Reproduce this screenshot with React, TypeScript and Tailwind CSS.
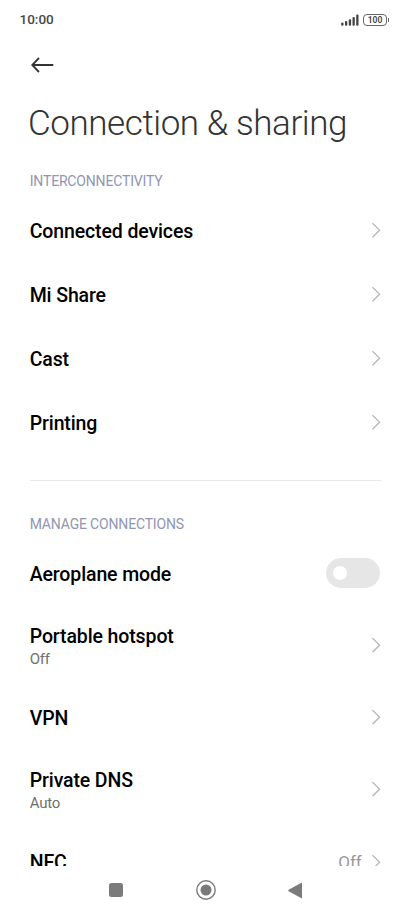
type RowProps = {
  title: string;
  subtitle?: string;
  value?: string;
};

const Chevron = () => (
  <svg width="9" height="16" viewBox="0 0 9 16" fill="none" className="shrink-0">
    <path d="M0.5 1.1L7.6 8.2L0.5 15.3" stroke="#b5b5b5" strokeWidth="1.3" />
  </svg>
);

const Row = ({ title, subtitle, value }: RowProps) => (
  <div
    className={`flex shrink-0 items-center justify-between ${
      subtitle ? "h-[80.3px]" : "h-16"
    }`}
  >
    <div className={subtitle ? "pt-[3px]" : "pt-[2px]"}>
      <p className="text-[19.5px] leading-[25px] font-medium tracking-[-0.12px] text-black">
        {title}
      </p>
      {subtitle && (
        <p className="text-[15px] leading-[21px] tracking-[-0.2px] text-[#707070]">
          {subtitle}
        </p>
      )}
    </div>
    <div className="flex items-center gap-2.5">
      {value && (
        <span className="pt-[3px] text-[17px] tracking-[-0.1px] text-[#999999]">
          {value}
        </span>
      )}
      <Chevron />
    </div>
  </div>
);

const StatusBar = () => (
  <header className="flex h-10 shrink-0 items-center justify-between pr-[22px] pb-px pl-[19.5px]">
    <span className="text-[13.5px] font-medium text-[#484848]">10:00</span>
    <div className="flex items-center gap-1">
      <svg width="18" height="12" viewBox="0 0 18 12" fill="#444444">
        <rect x="0.2" y="8.6" width="2.3" height="3.2" rx="1" />
        <rect x="4" y="7" width="2.3" height="4.8" rx="1" />
        <rect x="7.8" y="5.3" width="2.3" height="6.5" rx="1" />
        <rect x="11.5" y="3" width="2.3" height="8.8" rx="1" />
        <rect x="15.2" y="0.6" width="2.3" height="11.2" rx="1" />
      </svg>
      <div className="flex items-center gap-px">
        <div className="flex h-[12px] w-[24px] items-center justify-center rounded-[4px] border-[1.5px] border-[#666666] pt-px text-[8.5px] leading-none font-semibold text-[#444444]">
          100
        </div>
        <div className="h-1 w-px bg-[#666666]" />
      </div>
    </div>
  </header>
);

const App = () => {
  return (
    <div className="flex h-[914px] w-[411px] flex-col overflow-hidden bg-white font-['Roboto',sans-serif]">
      <StatusBar />
      <main className="flex h-[826px] shrink-0 flex-col overflow-hidden pr-[30.5px] pl-[29.7px]">
        <div className="flex h-[50px] shrink-0 items-center pl-[1.5px]">
          <svg width="23" height="16" viewBox="0 0 23 16" fill="none" stroke="#333333" strokeWidth="1.8">
            <path d="M22.3 8H1.5M8 1L1.2 8L8 15" />
          </svg>
        </div>
        <h1 className="-ml-[1.7px] h-[67px] shrink-0 text-[35px] leading-[68px] font-light tracking-[-0.43px] whitespace-nowrap text-[#333333]">
          Connection &amp; sharing
        </h1>
        <h2 className="h-[41px] shrink-0 pt-[14px] text-[14px] leading-[20px] tracking-[-0.17px] text-[#9096b2]">
          INTERCONNECTIVITY
        </h2>
        <Row title="Connected devices" />
        <Row title="Mi Share" />
        <Row title="Cast" />
        <Row title="Printing" />
        <div className="mt-[26px] h-px shrink-0 bg-[#e8e8e8]" />
        <h2 className="h-[60px] shrink-0 pt-[33px] text-[14px] leading-[20px] tracking-[-0.17px] text-[#9096b2]">
          MANAGE CONNECTIONS
        </h2>
        <div className="flex h-16 shrink-0 items-center justify-between">
          <p className="pt-[2px] text-[19.5px] leading-[25px] font-medium tracking-[-0.12px] text-black">
            Aeroplane mode
          </p>
          <div className="mr-[0.5px] flex h-[30px] w-[54.5px] items-center rounded-full bg-[#e6e6e6] pl-[7px]">
            <div className="size-[14px] rounded-full bg-white" />
          </div>
        </div>
        <Row title="Portable hotspot" subtitle="Off" />
        <Row title="VPN" />
        <Row title="Private DNS" subtitle="Auto" />
        <Row title="NFC" value="Off" />
      </main>
      <nav className="flex h-12 shrink-0 items-center justify-center gap-[72.5px]">
        <div className="size-[14px] rounded-[2.5px] bg-[#7b7b7b]" />
        <svg width="20" height="20" viewBox="0 0 20 20">
          <circle cx="10" cy="10" r="9.2" fill="none" stroke="#7b7b7b" strokeWidth="1.4" />
          <circle cx="10" cy="10" r="5.5" fill="#7b7b7b" />
        </svg>
        <svg width="14" height="17" viewBox="0 0 14 17" fill="#7b7b7b">
          <path d="M14 0.6V16.4L0.6 9.2Q-0.2 8.5 0.6 7.8Z" />
        </svg>
      </nav>
    </div>
  );
};

export default App;
